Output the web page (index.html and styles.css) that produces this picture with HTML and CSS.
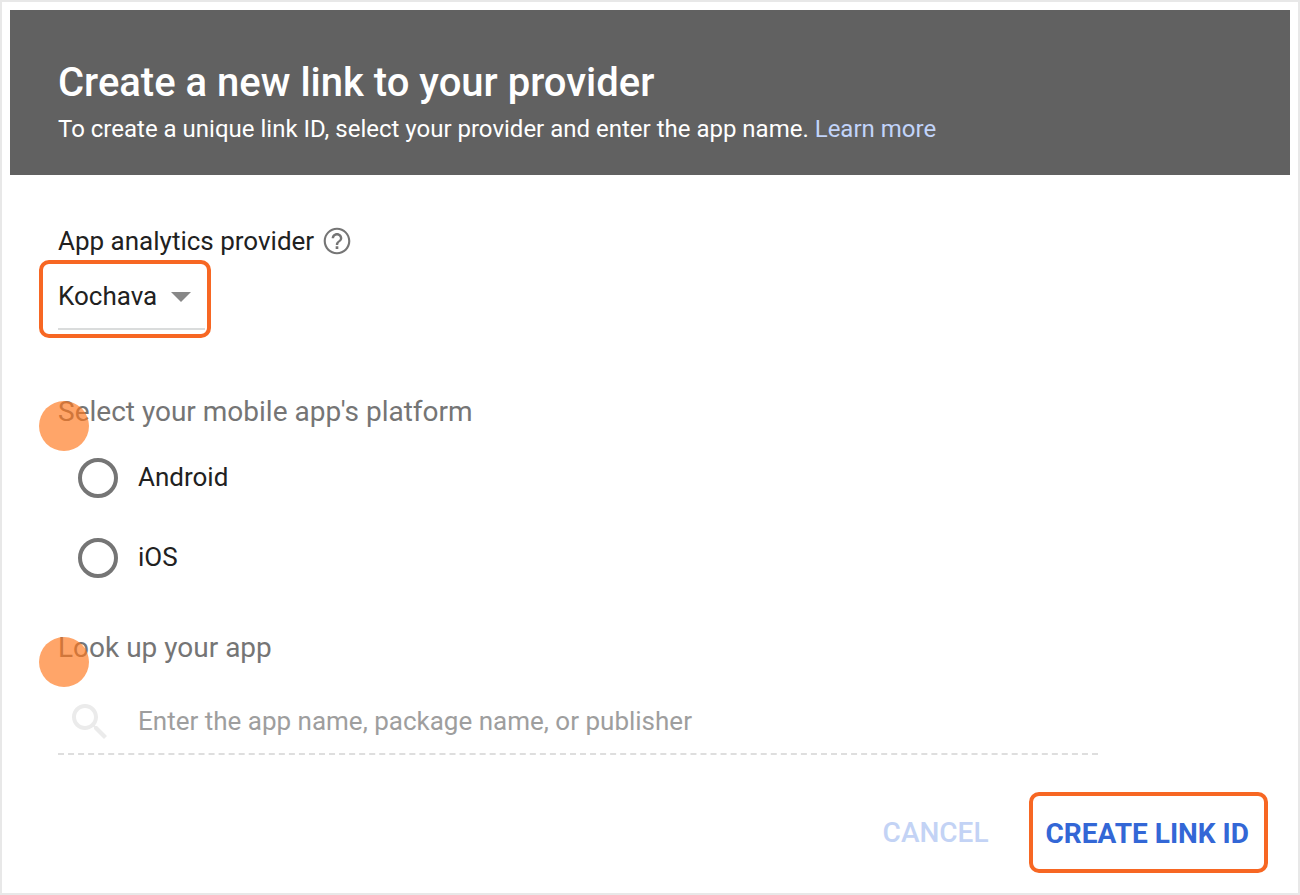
FILE: index.html
```html
<!DOCTYPE html>
<html lang="en">
<head>
<meta charset="utf-8">
<meta name="viewport" content="width=device-width, initial-scale=1">
<title>Create a new link to your provider</title>
<link rel="stylesheet" href="styles.css">
</head>
<body>
<main class="dialog">
  <header class="dialog-header">
    <h1 class="title">Create a new link to your provider</h1>
    <p class="subtitle">To create a unique link ID, select your provider and enter the app name. <a class="learn-more" href="#">Learn more</a></p>
  </header>
  <form class="dialog-body">
    <div class="provider-label">
      <label for="provider">App analytics provider</label>
      <button class="help" type="button" aria-label="Help">
        <svg viewBox="0 0 24 24" width="32" height="32" aria-hidden="true"><path fill="currentColor" d="M11 18h2v-2h-2v2zm1-16C6.480 2 2 6.480 2 12s4.480 10 10 10 10-4.480 10-10S17.520 2 12 2zm0 18.400c-4.640 0-8.400-3.760-8.400-8.400S7.360 3.600 12 3.600s8.400 3.760 8.400 8.400-3.760 8.400-8.400 8.400zM12 6c-2.210 0-4 1.790-4 4h1.800c0-1.200 1-2.200 2.200-2.200s2.200 1 2.200 2.200c0 2-3.100 1.900-3.100 5h1.800c0-2.250 3.100-2.500 3.100-5 0-2.210-1.790-4-4-4z"/></svg>
      </button>
    </div>
    <div class="provider-highlight">
      <div class="select-wrap">
        <select class="provider" id="provider"><option>Kochava</option></select>
        <svg class="caret" viewBox="0 0 20 10" width="20" height="10" aria-hidden="true"><path d="M0 0h20L10 10z"/></svg>
      </div>
    </div>
    <fieldset class="platforms">
      <legend class="section-title step">Select your mobile app's platform</legend>
      <label class="option"><input class="radio" type="radio" name="platform"><span class="option-text">Android</span></label>
      <label class="option"><input class="radio" type="radio" name="platform"><span class="option-text">iOS</span></label>
    </fieldset>
    <section class="lookup">
      <label class="section-title step" for="app">Look up your app</label>
      <div class="search">
        <svg class="search-icon" viewBox="0 0 24 24" width="48" height="48" aria-hidden="true"><path fill="currentColor" d="M15.500 14h-.79l-.28-.27C15.410 12.590 16 11.110 16 9.500 16 5.910 13.090 3 9.500 3S3 5.910 3 9.500 5.910 16 9.500 16c1.610 0 3.090-.59 4.230-1.570l.27.28v.79l5 4.990L20.490 19l-4.990-5zm-6 0C7.010 14 5 11.990 5 9.500S7.010 5 9.500 5 14 7.010 14 9.500 11.990 14 9.500 14z"/></svg>
        <input class="search-input" id="app" type="text" placeholder="Enter the app name, package name, or publisher">
      </div>
    </section>
    <footer class="actions">
      <button class="btn cancel" type="button">CANCEL</button>
      <button class="btn create" type="button">CREATE LINK ID</button>
    </footer>
  </form>
</main>
</body>
</html>
```
FILE: styles.css
```css
* { box-sizing: border-box; }
body {
  margin: 0;
  background: #fff;
  color: #212121;
  font-family: Roboto, "Liberation Sans", sans-serif;
  font-size: 26px;
  line-height: 32px;
}
.dialog {
  min-height: 100vh;
  padding: 8px;
  border: 2px solid #e8e8e8;
}
.dialog-header {
  padding: 49px 48px 30px;
  background: #616161;
  color: #fff;
}
.title {
  margin: 0 0 6px;
  font-size: 40px;
  font-weight: 500;
  line-height: 48px;
}
.subtitle {
  margin: 0;
  font-size: 24px;
}
.learn-more {
  color: #c2d4fa;
  text-decoration: none;
}
.dialog-body { padding: 50px 22px 0 48px; }
.provider-label {
  display: flex;
  align-items: center;
  gap: 7px;
}
.help {
  display: flex;
  padding: 0;
  border: 0;
  background: none;
  color: #757575;
}
.provider-highlight {
  width: fit-content;
  margin: 3px 0 0 -19px;
  padding: 8px 2px 4px 15px;
  border: 4px solid #f76723;
  border-radius: 10px;
}
.select-wrap {
  position: relative;
  border-bottom: 2px solid #dadcdc;
}
.provider {
  display: block;
  width: 100%;
  height: 56px;
  padding: 0 47px 8px 0;
  border: 0;
  appearance: none;
  background: none;
  color: inherit;
  font: inherit;
}
.caret {
  position: absolute;
  top: 20px;
  right: 14px;
  fill: #888;
  pointer-events: none;
}
.platforms {
  margin: 56px 0 0;
  padding: 0;
  border: 0;
}
.section-title {
  display: block;
  padding: 0;
  color: #757575;
  font-size: 28px;
  line-height: 36px;
}
.step { position: relative; }
.step::after {
  content: "";
  position: absolute;
  top: 7px;
  left: -19px;
  width: 50px;
  height: 50px;
  border-radius: 50%;
  background: rgba(255, 118, 28, .66);
}
.option {
  display: flex;
  align-items: center;
  gap: 20px;
  width: fit-content;
  margin: 28px 0 40px 20px;
}
.option + .option { margin-bottom: 0; }
.option-text { padding-bottom: 2px; }
.radio {
  width: 40px;
  height: 40px;
  margin: 0;
  border: 4px solid #757575;
  border-radius: 50%;
  appearance: none;
}
.radio:checked { background: radial-gradient(#757575 50%, #fff 55%); }
.lookup {
  max-width: 1040px;
  margin-top: 52px;
}
.search {
  display: flex;
  align-items: center;
  gap: 24px;
  padding: 32px 0 7px 8px;
  border-bottom: 2px dashed #dedede;
}
.search-icon {
  flex: none;
  color: #ebebeb;
}
.search-input {
  flex: 1;
  min-width: 0;
  padding: 0 0 2px;
  border: 0;
  background: none;
  color: inherit;
  font: inherit;
}
.search-input::placeholder {
  color: #9e9e9e;
  opacity: 1;
}
.actions {
  display: flex;
  justify-content: flex-end;
  align-items: center;
  gap: 40px;
  padding-top: 37px;
}
.btn {
  padding: 0;
  border: 0;
  background: none;
  font: 500 28px/36px Roboto, "Liberation Sans", sans-serif;
}
.cancel { color: #c3d3f5; }
.create {
  padding: 20px 15px 17px 13px;
  border: 4px solid #f76723;
  border-radius: 10px;
  color: #3367d6;
  font-weight: 700;
}
```
